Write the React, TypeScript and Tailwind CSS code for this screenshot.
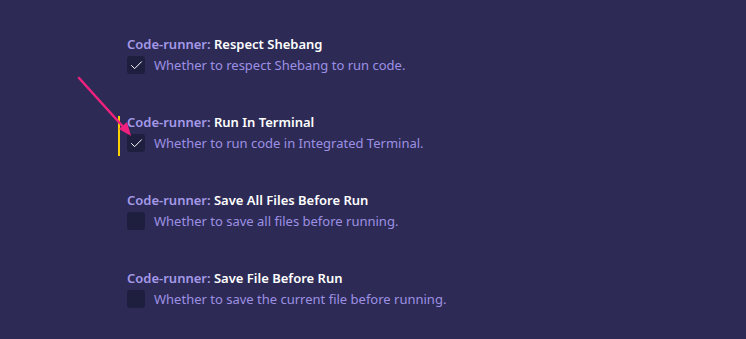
import { Check } from "lucide-react";

interface Setting {
    name: string;
    description: string;
    checked: boolean;
    focused?: boolean;
}

const SETTINGS: Setting[] = [
    { name: "Respect Shebang", description: "Whether to respect Shebang to run code.", checked: true },
    { name: "Run In Terminal", description: "Whether to run code in Integrated Terminal.", checked: true, focused: true },
    { name: "Save All Files Before Run", description: "Whether to save all files before running.", checked: false },
    { name: "Save File Before Run", description: "Whether to save the current file before running.", checked: false },
];

function SettingItem({ setting }: { setting: Setting }) {
    return (
        <div className="relative h-[78px]">
            {setting.focused && <div className="absolute left-[-9px] top-[3px] h-[40px] w-[2px] bg-[#fad000]" />}
            <div className="h-[18px] text-[13px] leading-[18px] font-semibold whitespace-nowrap">
                <span className="text-[#a599e9]">Code-runner: </span>
                <span className="text-white">{setting.name}</span>
            </div>
            <div className="mt-[3px] flex items-center gap-[9px]">
                <div className="flex h-[18px] w-[18px] flex-none items-center justify-center rounded-[3px] bg-[#1e1e3f]">
                    {setting.checked && <Check size={15} strokeWidth={1.6} className="text-white" />}
                </div>
                <span className="text-[13px] leading-[18px] text-[#9d90e4] whitespace-nowrap">{setting.description}</span>
            </div>
        </div>
    );
}

export default function App() {
    return (
        <div
            className="relative h-[339px] w-[746px] overflow-hidden bg-[#2d2b55] pl-[127px] pt-[35px]"
            style={{ fontFamily: '"Noto Sans", "Open Sans", sans-serif' }}
        >
            {SETTINGS.map((s) => (
                <SettingItem key={s.name} setting={s} />
            ))}
            <svg className="absolute left-0 top-0" width="746" height="339" viewBox="0 0 746 339">
                <line x1="79" y1="78" x2="126" y2="130" stroke="#f0217e" strokeWidth="2.5" strokeLinecap="round" />
                <polygon points="131,136 119,129 127,122" fill="#f0217e" />
            </svg>
        </div>
    );
}
